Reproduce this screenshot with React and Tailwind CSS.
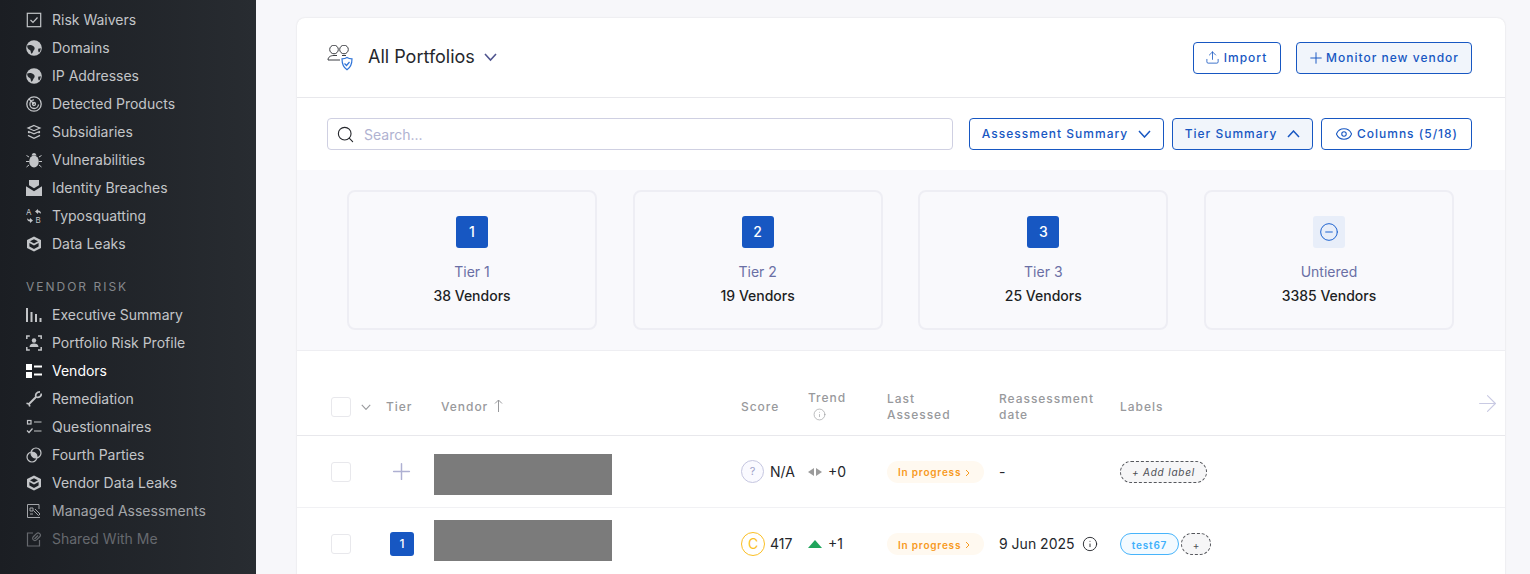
import { Eye, Info, Plus, Search, Upload, MinusCircle, ArrowRight } from "lucide-react";

const Ico = ({ children, strokeWidth = 1.2 }) => (
    <svg width="16" height="16" viewBox="0 0 16 16" fill="none" stroke="currentColor" strokeWidth={strokeWidth} className="shrink-0">{children}</svg>
);

const Fill = ({ children }) => (
    <svg width="16" height="16" viewBox="0 0 16 16" fill="currentColor" className="shrink-0">{children}</svg>
);

const Chev = ({ w = 13, up, className, sw = 1.5 }) => (
    <svg width={w} height={w * 0.62} viewBox="0 0 13 8" fill="none" stroke="currentColor" strokeWidth={sw} className={`shrink-0 ${className || ""}`}>
        <path d={up ? "M1 7l5.5-6 5.500 6" : "M1 1l5.5 6 5.500-6"} />
    </svg>
);

const CheckSquare = () => <Ico><rect x="1.3" y="1.3" width="13.4" height="13.4" /><path d="M4.5 8l2.5 2.5 4.5-5" /></Ico>;
const Globe = () => (
    <Fill>
        <circle cx="8" cy="8" r="7.800" />
        <path fill="#23272c" d="M1.200 5.500C3.500 4.500 6.500 5 8 6.800c1.200 1.500.6 2.700-.4 3.700-.8 1-.8 3-2.300 3.200C4.500 12 5 10.500 3.800 10 2 9.500 1 7.500 1.200 5.500zM12.500 8.500c1 .2 1.800 0 2.300-.5 0 1.800-.6 3.500-1.800 4.500-.8-1-1.200-2.700-.5-4z" />
    </Fill>
);
const Radar = () => <Ico strokeWidth={1.3}><circle cx="8" cy="8" r="7.200" /><path d="M12.500 8.500a4.300 4.300 0 1 1-4.500-4.600" /><circle cx="8" cy="8" r="1.500" /><path d="M3 3l5 5" /></Ico>;
const Layers = () => <Ico><path d="M8 1.500l6 2.600-6 2.600-6-2.600zM2 7.200l6 2.600 6-2.600M2 8.300l1.500.6M14 8.300l-1.500.6M2 11.400l6 2.900 6-2.900" /></Ico>;
const Bug = () => (
    <Fill>
        <ellipse cx="8" cy="9.500" rx="4.800" ry="6" />
        <path d="M5.500 3.500C6 1.800 7 1 8 1s2 .8 2.500 2.500z" />
        <path stroke="currentColor" strokeWidth="1" fill="none" d="M3 5L0.500 3.500M13 5l2.500-1.500M3 9.500H0M13 9.500h3M3 13l-2.500 2M13 13l2.500 2" />
    </Fill>
);
const Envelope = () => (
    <Fill>
        <path d="M3 0h10v5.300L8 8.300 3 5.300z" />
        <path d="M0 6.300l8 4.900 8-4.900V16H0z" />
    </Fill>
);
const Typo = () => (
    <svg width="16" height="16" viewBox="0 0 16 16" className="shrink-0" fill="currentColor">
        <text x="0" y="7" fontSize="8" fontFamily="Inter, sans-serif">A</text>
        <text x="9.500" y="15" fontSize="8" fontFamily="Inter, sans-serif">B</text>
        <path d="M9 3.500L12 1v1.600c2 0 3 1.300 3 3.400-.6-1-1.500-1.500-3-1.500V6zM7 12.500L4 15v-1.600C2 13.400 1 12 1 10c.6 1 1.500 1.500 3 1.500V10z" />
    </svg>
);
const Hex = () => (
    <Fill>
        <path fillRule="evenodd" d="M8 .5l7 3.600v7.800l-7 3.600-7-3.600V4.100zM8 3.200L4 5.300 8 7.400l4-2.100zM3.400 7v3.500L8 13l4.600-2.500V7L8 9.400z" />
    </Fill>
);
const Bars = () => (
    <Fill>
        <rect x="0" y="1" width="2" height="14" /><rect x="4.500" y="5" width="2" height="10" /><rect x="9" y="7" width="2" height="8" /><rect x="13.500" y="11" width="2" height="4" />
    </Fill>
);
const Profile = () => (
    <Ico strokeWidth={1.500}>
        <path d="M.8 4V1h3M12 1h3.200v3M.8 12v3h3M12 15h3.200v-3" />
        <circle cx="8" cy="5.500" r="2.200" fill="currentColor" stroke="none" />
        <path d="M3.500 12c0-2.500 2-3.500 4.500-3.500s4.500 1 4.500 3.500z" fill="currentColor" stroke="none" />
    </Ico>
);
const VendorsIco = () => (
    <Fill>
        <rect x="0" y="1" width="6" height="6" /><rect x="0" y="9" width="6" height="6" /><rect x="8" y="2.500" width="8" height="2" /><rect x="8" y="10.500" width="8" height="2" />
    </Fill>
);
const Wrench = () => (
    <Ico strokeWidth={1.700}>
        <path d="M3 13l7-7" strokeWidth="2" />
        <path d="M14 .9C10.500.9 9 3.500 10 6M15.300 2.500C15.500 5.500 13 7 10 6" />
        <path d="M.5 12.200L3 13l.8 2.500" />
    </Ico>
);
const Quest = () => (
    <Ico><rect x="1.500" y="1.500" width="3.500" height="3.500" /><path d="M8 3h7.500M1 11.500l2 2 3.500-4M8 12h7.500" /></Ico>
);
const Venn = () => (
    <Ico>
        <circle cx="6" cy="10" r="5" />
        <circle cx="10" cy="6" r="5" />
        <path fill="currentColor" stroke="none" d="M5.080 5.080A5 5 0 0 1 10.920 10.920 5 5 0 0 1 5.080 5.080z" />
    </Ico>
);
const Managed = () => (
    <Ico strokeWidth={1}><path d="M13 6V1.500H1.500v13H14" /><path d="M4 5h3v3H4zM4 11h3M9 6l5 5-1.500 1.500-5-5" /></Ico>
);
const Shared = () => (
    <Ico>
        <path d="M7 2H1.500v13h12V9" />
        <rect x="6" y="3.500" width="9" height="4.500" rx="2.250" transform="rotate(-45 10.500 5.750)" />
        <path d="M8.500 8l3.500-3.500" />
    </Ico>
);

const topItems = [
    ["Risk Waivers", <CheckSquare />],
    ["Domains", <Globe />],
    ["IP Addresses", <Globe />],
    ["Detected Products", <Radar />],
    ["Subsidiaries", <Layers />],
    ["Vulnerabilities", <Bug />],
    ["Identity Breaches", <Envelope />],
    ["Typosquatting", <Typo />],
    ["Data Leaks", <Hex />],
];

const vendorItems = [
    ["Executive Summary", <Bars />],
    ["Portfolio Risk Profile", <Profile />],
    ["Vendors", <VendorsIco />, "active"],
    ["Remediation", <Wrench />],
    ["Questionnaires", <Quest />],
    ["Fourth Parties", <Venn />],
    ["Vendor Data Leaks", <Hex />],
    ["Managed Assessments", <Managed />, "dim"],
    ["Shared With Me", <Shared />, "off"],
];

const NavItem = ({ label, icon, state }) => {
    let color = "text-[#c3c5c8]";
    if (state === "active") color = "text-white";
    if (state === "dim") color = "text-[#a3a5a9]";
    if (state === "off") color = "text-[#66696e]";
    return (
        <div className={`flex items-center gap-[10px] h-[28px] text-sm ${color}`}>
            {icon}
            <span>{label}</span>
        </div>
    );
};

const Sidebar = () => (
    <div className="w-[256px] shrink-0 h-full bg-gradient-to-r from-[#1b1e23] to-[#282c31] pl-[26px] pt-[6px]">
        {topItems.map(([label, icon]) => <NavItem key={label} label={label} icon={icon} />)}
        <div className="mt-[19px] mb-[4px] h-[20px] flex items-center text-xs tracking-[2px] text-[#85888c]">VENDOR RISK</div>
        {vendorItems.map(([label, icon, state]) => <NavItem key={label} label={label} icon={icon} state={state} />)}
    </div>
);

const Btn = ({ children, active, className }) => (
    <button className={`h-[32px] flex items-center justify-center border border-[#1757c2] rounded-[4px] text-xs font-medium tracking-[1px] text-[#1757c2] ${active ? "bg-[#f1f5fb]" : "bg-white"} ${className}`}>
        {children}
    </button>
);

const TierBadge = ({ n, small }) => (
    <div className={`bg-[#1757c2] text-white flex items-center justify-center font-medium ${small ? "w-[24px] h-[24px] rounded-[3px] text-xs" : "w-[32px] h-[32px] rounded-[3px] text-sm"}`}>{n}</div>
);

const TierCard = ({ icon, label, count }) => (
    <div className="w-[250px] h-[140px] border-2 border-[#eeeef4] rounded-[8px] flex flex-col items-center pt-[24px]">
        {icon}
        <div className="mt-[14px] text-sm leading-[20px] text-[#6a6fa5]">{label}</div>
        <div className="mt-[4px] text-sm leading-[20px] font-medium text-[#1d1f24]">{count}</div>
    </div>
);

const Checkbox = () => <div className="w-[20px] h-[20px] border border-[#e8e8ec] rounded-[3px] bg-white" />;

const colGrid = "grid grid-cols-[55px_48px_307px_67px_79px_112px_121px_1fr] pl-[34px] items-center";
const headText = "text-xs font-medium tracking-[0.08em] leading-[16px] text-[#98999c]";

const Grey = ({ className }) => <div className={`w-[178px] h-[41px] bg-[#7b7b7b] ${className}`} />;

const InProgress = () => (
    <div className="w-[97px] h-[22px] rounded-full bg-[#fff9f0] flex items-center pl-[11px] pt-[2px] gap-[4px] text-[10px] font-semibold tracking-[0.8px] text-[#f79a1e]">
        In progress
        <svg width="5" height="8" viewBox="0 0 5 8" fill="none" stroke="currentColor" strokeWidth="1"><path d="M1 1l3 3-3 3" /></svg>
    </div>
);

const Table = () => (
    <div>
        <div className={`${colGrid} h-[85px] pt-[28px] border-b border-[#e8e8ec] relative`}>
            <div className="flex items-center">
                <Checkbox />
                <Chev w={10} sw={1.4} className="ml-[10px] text-[#98999c]" />
            </div>
            <div className={headText}>Tier</div>
            <div className={`${headText} flex items-center pl-[7px]`}>
                Vendor
                <svg width="9" height="13" viewBox="0 0 9 13" fill="none" stroke="currentColor" strokeWidth="1" className="ml-[6px] -mt-[4px]">
                    <path d="M4.500 13V1M1 4.500l3.500-3.500 3.500 3.500" />
                </svg>
            </div>
            <div className={headText}>Score</div>
            <div className={`${headText} flex flex-col items-start -mt-[4px]`}>
                <span>Trend</span>
                <Info size={13} strokeWidth={1.2} className="ml-[5px] mt-[2px]" />
            </div>
            <div className={headText}>Last<br />Assessed</div>
            <div className={headText}>Reassessment<br />date</div>
            <div className={headText}>Labels</div>
            <ArrowRight size={27} strokeWidth={1} className="absolute right-[4px] top-[39px] text-[#c9cae3]" />
        </div>
        <div className={`${colGrid} h-[72px] border-b border-[#f1f1f4]`}>
            <Checkbox />
            <div className="pl-[2px]"><Plus size={27} strokeWidth={1.3} className="text-[#aeb0d2]" /></div>
            <Grey className="mt-[6px]" />
            <div className="flex items-center gap-[6px] text-sm text-[#25272c]">
                <div className="w-[23px] h-[23px] rounded-full border border-[#c5c6e0] bg-[#fafaff] flex items-center justify-center text-[11px] text-[#a0a2c8]">?</div>
                N/A
            </div>
            <div className="flex items-center gap-[6px] text-sm text-[#25272c]">
                <svg width="14" height="8" viewBox="0 0 14 8" fill="#9b9b9b"><path d="M6 0v8L0 4zM8 0v8l6-4z" /></svg>
                +0
            </div>
            <InProgress />
            <div className="text-sm text-[#25272c]">-</div>
            <div className="w-[87px] h-[22px] pt-[2px] rounded-full border border-dashed border-[#55575c] bg-[#f6f6f7] flex items-center justify-center text-[10px] italic tracking-[0.08em] text-[#4c4e53]">+ Add label</div>
        </div>
        <div className={`${colGrid} h-[72px]`}>
            <Checkbox />
            <div className="pl-[4px]"><TierBadge n="1" small /></div>
            <Grey className="mb-[8px]" />
            <div className="flex items-center gap-[5px] text-sm text-[#25272c]">
                <div className="w-[24px] h-[24px] rounded-full border-[1.5px] border-[#fbbf24] flex items-center justify-center text-sm text-[#fbbf24]">C</div>
                417
            </div>
            <div className="flex items-center gap-[6px] text-sm text-[#25272c]">
                <svg width="14" height="8" viewBox="0 0 14 8" fill="#1fa55c"><path d="M7 0l7 8H0z" /></svg>
                +1
            </div>
            <InProgress />
            <div className="flex items-center gap-[7px] text-sm text-[#25272c]">
                9 Jun 2025
                <Info size={16} strokeWidth={1.4} />
            </div>
            <div className="flex items-center gap-[2px]">
                <div className="w-[59px] h-[22px] pt-[2px] rounded-full border border-[#47b4fb] bg-[#f3faff] flex items-center justify-center text-[10px] font-semibold tracking-[0.08em] text-[#3fb0fb]">test67</div>
                <div className="w-[30px] h-[22px] pt-[2px] rounded-full border border-dashed border-[#55575c] bg-[#f6f6f7] flex items-center justify-center text-[10px] text-[#4c4e53]">+</div>
            </div>
        </div>
    </div>
);

const App = () => {
    return (
        <div className="w-[1530px] h-[574px] overflow-hidden flex bg-[#f7f7fa] font-[Inter,sans-serif]">
            <Sidebar />
            <div className="flex-1 pl-[41px] pr-[25px] pt-[18px]">
                <div className="w-[1208px] bg-white rounded-t-[8px] shadow-[0_0_2px_rgba(0,0,0,0.12)]">
                    <div className="h-[80px] border-b border-[#e8e8ec] flex items-center pl-[30px] pr-[33px]">
                        <svg width="28" height="26" viewBox="0 0 28 26" fill="none" stroke="#3b3d42" strokeWidth="1" className="shrink-0">
                            <circle cx="7" cy="4.500" r="4.300" />
                            <circle cx="17" cy="4.500" r="4.300" />
                            <path d="M1 15c0-3 2.500-4.500 6-4.500h3M1 15h12M15 10.500h4" />
                            <path d="M20 12.500c1.500 1 3 1.300 5 1.300 0 5-1 8.500-5 11-4-2.500-5-6-5-11 2 0 3.500-.3 5-1.300z" stroke="#2f74d9" strokeWidth="1.200" fill="white" />
                            <path d="M17.500 18.500l2 2 3-3.500" stroke="#2f74d9" strokeWidth="1.200" />
                        </svg>
                        <span className="ml-[13px] -mt-[2px] text-lg text-[#25272c]">All Portfolios</span>
                        <Chev sw={1.6} className="ml-[9px] text-[#50558f]" />
                        <Btn className="ml-auto w-[88px] gap-[4px] pr-[2px]"><Upload size={15} strokeWidth={1.3} />Import</Btn>
                        <Btn active className="ml-[15px] w-[176px] gap-[1px] pr-[2px]"><Plus size={18} strokeWidth={1.3} />Monitor new vendor</Btn>
                    </div>
                    <div className="h-[72px] flex items-center pl-[30px] pr-[33px]">
                        <div className="w-[626px] h-[32px] border border-[#cfd0e2] rounded-[4px] flex items-center pl-[8px] gap-[9px]">
                            <Search size={19} strokeWidth={1.4} className="text-[#25272c]" />
                            <span className="text-sm pt-[2px] text-[#b0b2d1]">Search...</span>
                        </div>
                        <Btn className="ml-[16px] w-[195px] gap-[10px]">Assessment Summary<Chev /></Btn>
                        <Btn active className="ml-[8px] w-[141px] gap-[10px]">Tier Summary<Chev up /></Btn>
                        <Btn className="ml-[8px] w-[151px] gap-[4px]"><Eye size={18} strokeWidth={1.4} />Columns (5/18)</Btn>
                    </div>
                    <div className="h-[181px] bg-[#f9f9fc] border-b border-[#eeeef2] flex justify-between pl-[50px] pr-[51px] pt-[20px]">
                        <TierCard icon={<TierBadge n="1" />} label="Tier 1" count="38 Vendors" />
                        <TierCard icon={<TierBadge n="2" />} label="Tier 2" count="19 Vendors" />
                        <TierCard icon={<TierBadge n="3" />} label="Tier 3" count="25 Vendors" />
                        <TierCard
                            icon={<div className="w-[32px] h-[32px] rounded-[3px] bg-[#e8eef9] flex items-center justify-center"><MinusCircle size={20} strokeWidth={1.2} className="text-[#1f64d0]" /></div>}
                            label="Untiered"
                            count="3385 Vendors"
                        />
                    </div>
                    <Table />
                </div>
            </div>
        </div>
    );
};

export default App;
